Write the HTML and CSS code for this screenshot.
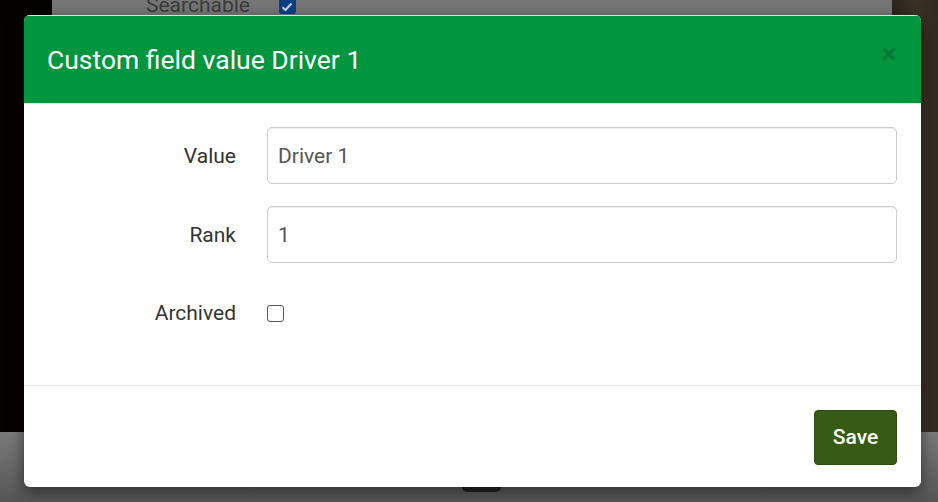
FILE: index.html
```html
<!DOCTYPE html>
<html>
<head>
<meta charset="utf-8">
<link rel="stylesheet" href="styles.css">
</head>
<body>
<div class="page">
  <div class="bg-left"></div>
  <div class="bg-mid">
    <div class="behind-row"><span class="behind-label">Searchable</span><span class="behind-check"><svg width="12" height="10" viewBox="0 0 12 10"><path d="M1.5 5.2 L4.5 8 L10.5 1.5" fill="none" stroke="#c9d3e0" stroke-width="2"/></svg></span></div>
  </div>
  <div class="bg-right"></div>
  <div class="bg-bottom"><div class="pill"></div></div>

  <div class="modal">
    <div class="modal-header">
      <h4 class="modal-title">Custom field value Driver 1</h4>
      <span class="close">×</span>
    </div>
    <div class="modal-body">
      <div class="form-row">
        <label class="form-label">Value</label>
        <input class="form-input" type="text" value="Driver 1">
      </div>
      <div class="form-row">
        <label class="form-label">Rank</label>
        <input class="form-input" type="text" value="1">
      </div>
      <div class="form-row check-row">
        <label class="form-label">Archived</label>
        <span class="checkbox"></span>
      </div>
    </div>
    <div class="modal-footer">
      <button class="btn-save">Save</button>
    </div>
  </div>
</div>
</body>
</html>
```

FILE: styles.css
```css
* { box-sizing: border-box; }
html, body { margin: 0; padding: 0; }
body {
  width: 938px;
  height: 502px;
  overflow: hidden;
  font-family: Roboto, "Liberation Sans", sans-serif;
}
.page {
  position: relative;
  width: 938px;
  height: 502px;
  background: #6a6a6a;
}
.bg-left {
  position: absolute;
  left: 0; top: 0;
  width: 52px; height: 432px;
  background: #060101;
}
.bg-mid {
  position: absolute;
  left: 52px; top: 0;
  width: 840px; height: 432px;
  background: #767676;
}
.behind-row {
  display: flex;
  align-items: flex-start;
  margin-top: -7px;
  padding-left: 94px;
}
.behind-label {
  font-size: 21px;
  color: #3b3b3b;
  line-height: 24px;
}
.behind-check {
  margin-left: 29px;
  margin-top: 7px;
  width: 17px; height: 14px;
  background: #0a3f86;
  border-radius: 0 0 3px 3px;
  display: flex;
  align-items: center;
  justify-content: center;
}
.bg-right {
  position: absolute;
  left: 892px; top: 0;
  width: 46px; height: 432px;
  background: linear-gradient(90deg, #2c251e, #3b3126 50%, #332a22);
}
.bg-bottom {
  position: absolute;
  left: 0; top: 432px;
  width: 938px; height: 70px;
  background: linear-gradient(180deg, #7a7a7a, #555555);
}
.pill {
  position: absolute;
  left: 462px; top: 50px;
  width: 39px; height: 10px;
  background: #222;
  border-radius: 0 0 5px 5px;
}
.modal {
  position: absolute;
  left: 24px; top: 15px;
  width: 897px; height: 472px;
  background: #fff;
  border-radius: 6px;
  box-shadow: 0 5px 15px rgba(0,0,0,0.5);
  display: flex;
  flex-direction: column;
  overflow: hidden;
}
.modal-header {
  height: 89px;
  background: #00953f;
  border-top: 1px solid #d8e6dc;
  border-bottom: 1px solid #cfe9d6;
  display: flex;
  align-items: center;
  justify-content: space-between;
  padding: 0 24px 0 23px;
}
.modal-title {
  margin: 0;
  font-size: 26.5px;
  font-weight: 400;
  color: #fff;
  line-height: 30px;
  margin-top: 1px;
}
.close {
  font-size: 30px;
  font-weight: 700;
  color: rgba(0,0,0,0.2);
  line-height: 1;
  margin-top: -12px;
}
.modal-body {
  flex: 1;
  padding: 23px 24px 0 24px;
  display: flex;
  flex-direction: column;
  gap: 22px;
}
.form-row {
  display: flex;
  align-items: center;
  gap: 31px;
}
.form-label {
  width: 188px;
  text-align: right;
  font-size: 21px;
  color: #333;
}
.form-input {
  flex: 1;
  height: 57px;
  border: 1px solid #cccccc;
  border-radius: 5px;
  padding: 0 10px;
  font-family: Roboto, "Liberation Sans", sans-serif;
  font-size: 21px;
  color: #555;
  box-shadow: inset 0 1px 1px rgba(0,0,0,0.075);
  outline: none;
}
.check-row {
  margin-top: 16px;
}
.checkbox {
  width: 17px; height: 17px;
  border: 1.5px solid #555;
  border-radius: 3px;
  background: #fff;
}
.modal-footer {
  height: 102px;
  border-top: 1px solid #e8e8e8;
  display: flex;
  align-items: center;
  justify-content: flex-end;
  padding: 0 24px 0 24px;
}
.btn-save {
  width: 83px;
  height: 55px;
  background: #375a14;
  color: #fff;
  border: 1px solid #2e4c10;
  border-radius: 4px;
  font-family: Roboto, "Liberation Sans", sans-serif;
  font-size: 21px;
  font-weight: 500;
  margin-top: 1px;
}
```
